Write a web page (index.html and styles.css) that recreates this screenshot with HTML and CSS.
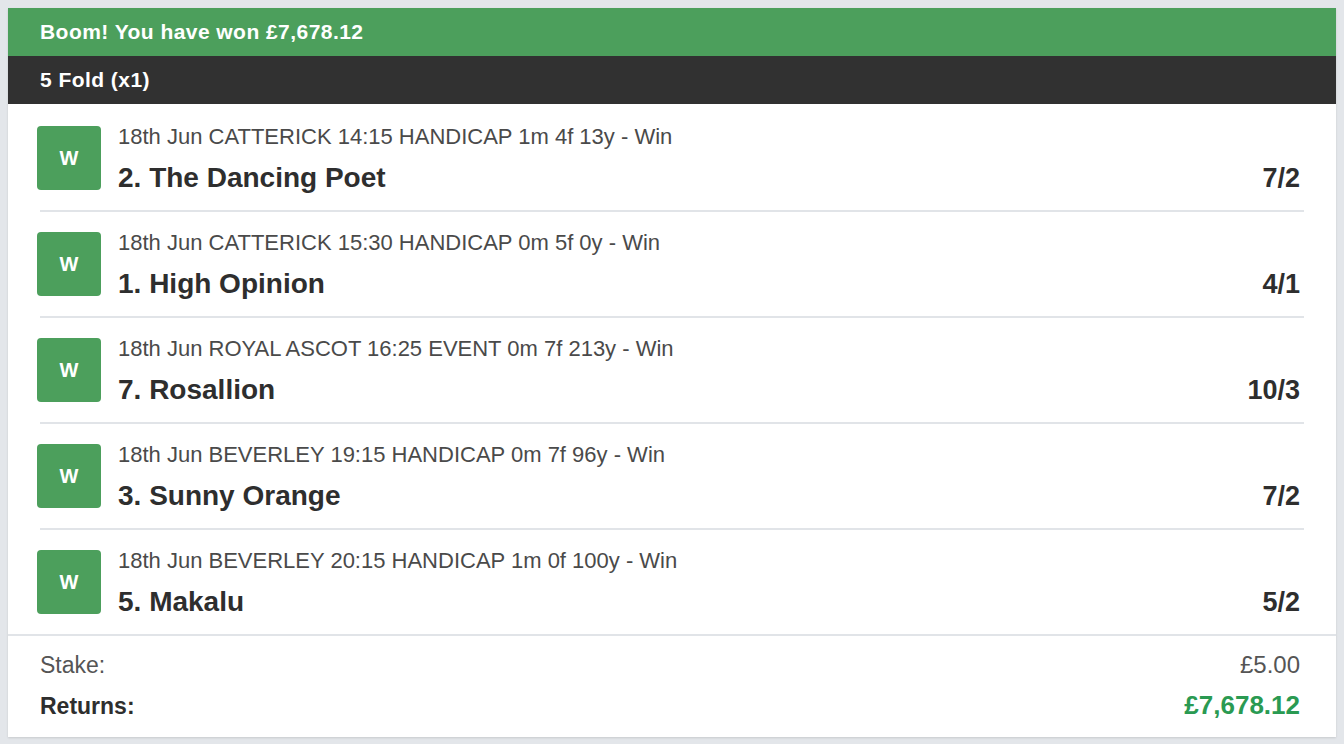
FILE: index.html
```html
<!DOCTYPE html>
<html lang="en">
<head>
<meta charset="utf-8">
<title>Bet receipt</title>
<link rel="stylesheet" href="styles.css">
</head>
<body>
<div class="card">
  <div class="win-banner">Boom! You have won £7,678.12</div>
  <div class="bet-type">5 Fold (x1)</div>
  <ul class="legs">
    <li class="leg">
      <span class="badge">W</span>
      <div class="leg-info">
        <div class="race">18th Jun CATTERICK 14:15 HANDICAP 1m 4f 13y - Win</div>
        <div class="runner-row"><span class="runner">2. The Dancing Poet</span><span class="odds">7/2</span></div>
      </div>
    </li>
    <li class="leg">
      <span class="badge">W</span>
      <div class="leg-info">
        <div class="race">18th Jun CATTERICK 15:30 HANDICAP 0m 5f 0y - Win</div>
        <div class="runner-row"><span class="runner">1. High Opinion</span><span class="odds">4/1</span></div>
      </div>
    </li>
    <li class="leg">
      <span class="badge">W</span>
      <div class="leg-info">
        <div class="race">18th Jun ROYAL ASCOT 16:25 EVENT 0m 7f 213y - Win</div>
        <div class="runner-row"><span class="runner">7. Rosallion</span><span class="odds">10/3</span></div>
      </div>
    </li>
    <li class="leg">
      <span class="badge">W</span>
      <div class="leg-info">
        <div class="race">18th Jun BEVERLEY 19:15 HANDICAP 0m 7f 96y - Win</div>
        <div class="runner-row"><span class="runner">3. Sunny Orange</span><span class="odds">7/2</span></div>
      </div>
    </li>
    <li class="leg">
      <span class="badge">W</span>
      <div class="leg-info">
        <div class="race">18th Jun BEVERLEY 20:15 HANDICAP 1m 0f 100y - Win</div>
        <div class="runner-row"><span class="runner">5. Makalu</span><span class="odds">5/2</span></div>
      </div>
    </li>
  </ul>
  <div class="totals">
    <div class="total-row"><span>Stake:</span><span class="stake">£5.00</span></div>
    <div class="total-row returns"><span>Returns:</span><span class="amount">£7,678.12</span></div>
  </div>
</div>
</body>
</html>
```
FILE: styles.css
```css
html, body {
  margin: 0;
  padding: 0;
}
body {
  background: #e3e6ea;
  font-family: "Liberation Sans", Arial, sans-serif;
  color: #333;
  padding: 8px;
}
.card {
  background: #fff;
  box-shadow: 0 1px 2px rgba(0, 0, 0, 0.12);
}
.win-banner {
  background: #4c9f5c;
  color: #fff;
  font-weight: bold;
  font-size: 21px;
  letter-spacing: 0.45px;
  height: 48px;
  line-height: 48px;
  padding: 0 32px;
}
.bet-type {
  background: #313131;
  color: #fff;
  font-weight: bold;
  font-size: 21px;
  letter-spacing: 0.45px;
  height: 48px;
  line-height: 48px;
  padding: 0 32px;
}
.legs {
  list-style: none;
  margin: 0;
  padding: 2px 0 0;
  border-bottom: 2px solid #e1e4e8;
}
.leg {
  display: flex;
  align-items: flex-start;
  margin: 0 32px;
  padding: 20px 4px 16px 0;
  border-bottom: 2px solid #e1e4e8;
}
.leg:last-child {
  border-bottom: none;
}
.badge {
  flex: none;
  width: 64px;
  height: 64px;
  margin-left: -3px;
  border-radius: 4px;
  background: #4c9f5c;
  color: #fff;
  font-weight: bold;
  font-size: 20px;
  display: flex;
  align-items: center;
  justify-content: center;
}
.leg-info {
  flex: 1;
  margin-left: 17px;
}
.race {
  font-size: 22px;
  color: #4a4a4a;
  line-height: 24px;
  margin-top: -1px;
}
.runner-row {
  display: flex;
  justify-content: space-between;
  align-items: baseline;
  margin-top: 13px;
  font-weight: bold;
  font-size: 28px;
  line-height: 32px;
  color: #2e2e2e;
}
.odds {
  font-size: 27px;
}
.totals {
  padding: 14px 36px 16px 32px;
}
.total-row {
  display: flex;
  justify-content: space-between;
  align-items: baseline;
  font-size: 23px;
  line-height: 30px;
  color: #555;
  margin-bottom: 10px;
}
.stake {
  font-size: 24px;
}
.total-row.returns {
  font-weight: bold;
  color: #2e2e2e;
  margin-bottom: 0;
}
.amount {
  font-size: 26px;
  color: #2a9a52;
}
```
